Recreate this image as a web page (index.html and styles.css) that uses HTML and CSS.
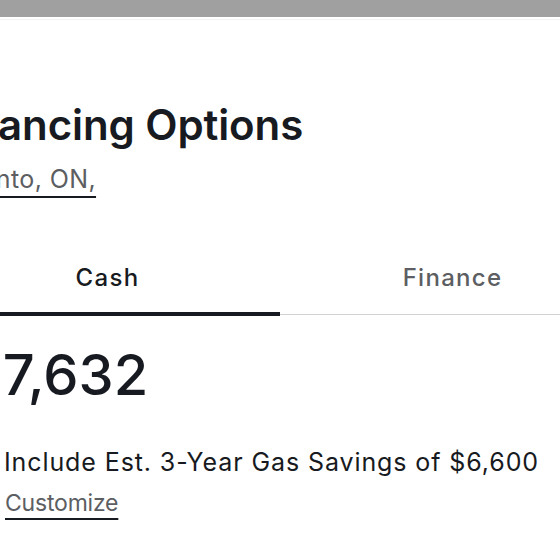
FILE: index.html
```html
<!DOCTYPE html>
<html lang="en">
<head>
<meta charset="utf-8">
<link rel="stylesheet" href="styles.css">
</head>
<body>
<div class="backdrop"></div>
<div class="panel">
  <div class="content">
    <header class="head">
      <h1 class="title">Financing Options</h1>
      <a class="location" href="#">Toronto, ON,</a>
    </header>
    <nav class="tabs">
      <div class="tab active">Cash</div>
      <div class="tab">Finance</div>
    </nav>
    <div class="price">$57,632</div>
    <label class="savings">
      <span class="checkbox"></span>
      <span class="savings-text">Include Est. 3-Year Gas Savings of $6,600</span>
    </label>
    <a class="customize" href="#">Customize</a>
  </div>
</div>
</body>
</html>
```
FILE: styles.css
```css
html, body {
  margin: 0;
  padding: 0;
  background: #ffffff;
  overflow: hidden;
}
body {
  width: 560px;
  height: 560px;
  font-family: "Inter", "Liberation Sans", sans-serif;
  color: #171a20;
}
.backdrop {
  height: 17px;
  background: #a0a0a0;
}
.panel {
  border-top: 2px solid #ffffff;
  box-shadow: inset 0 1px 0 #f2f2f2;
  padding-top: 1px;
}
.content {
  margin-left: -65px;
  width: 690px;
  display: flex;
  flex-direction: column;
}
.head {
  padding-left: 2px;
  padding-top: 80px;
  display: flex;
  flex-direction: column;
}
.title {
  margin: 0;
  font-size: 42px;
  line-height: 50px;
  font-weight: 600;
  letter-spacing: -0.1px;
}
.location {
  align-self: flex-start;
  margin-left: 4px;
  margin-top: 14px;
  font-size: 25px;
  line-height: 30px;
  letter-spacing: 0.4px;
  color: #5c5e62;
  text-decoration: underline;
  text-underline-offset: 8px;
  text-decoration-thickness: 1.5px;
  text-decoration-color: #171a20;
}
.tabs {
  margin-top: 54px;
  display: grid;
  grid-template-columns: 345px 345px;
  border-bottom: 1px solid #d0d1d2;
}
.tab {
  text-align: center;
  font-size: 24px;
  line-height: 30px;
  font-weight: 500;
  letter-spacing: 1.3px;
  color: #5c5e62;
  padding: 15px 0 19px;
  margin-bottom: -2px;
  border-bottom: 4px solid transparent;
}
.tab.active {
  color: #171a20;
  border-bottom-color: #171a20;
}
.price {
  margin-left: -3px;
  margin-top: 28px;
  font-size: 56px;
  line-height: 64px;
  font-weight: 500;
}
.savings {
  margin-top: 40px;
  display: flex;
  align-items: center;
  gap: 19px;
  font-size: 25px;
  line-height: 30px;
  letter-spacing: 0.9px;
}
.checkbox {
  width: 50px;
  height: 22px;
  flex: none;
}
.customize {
  align-self: flex-start;
  margin-left: 70px;
  margin-top: 12px;
  font-size: 23px;
  line-height: 28px;
  letter-spacing: -0.2px;
  color: #5c5e62;
  text-decoration: underline;
  text-underline-offset: 7px;
  text-decoration-thickness: 1.5px;
  text-decoration-color: #171a20;
}
```
